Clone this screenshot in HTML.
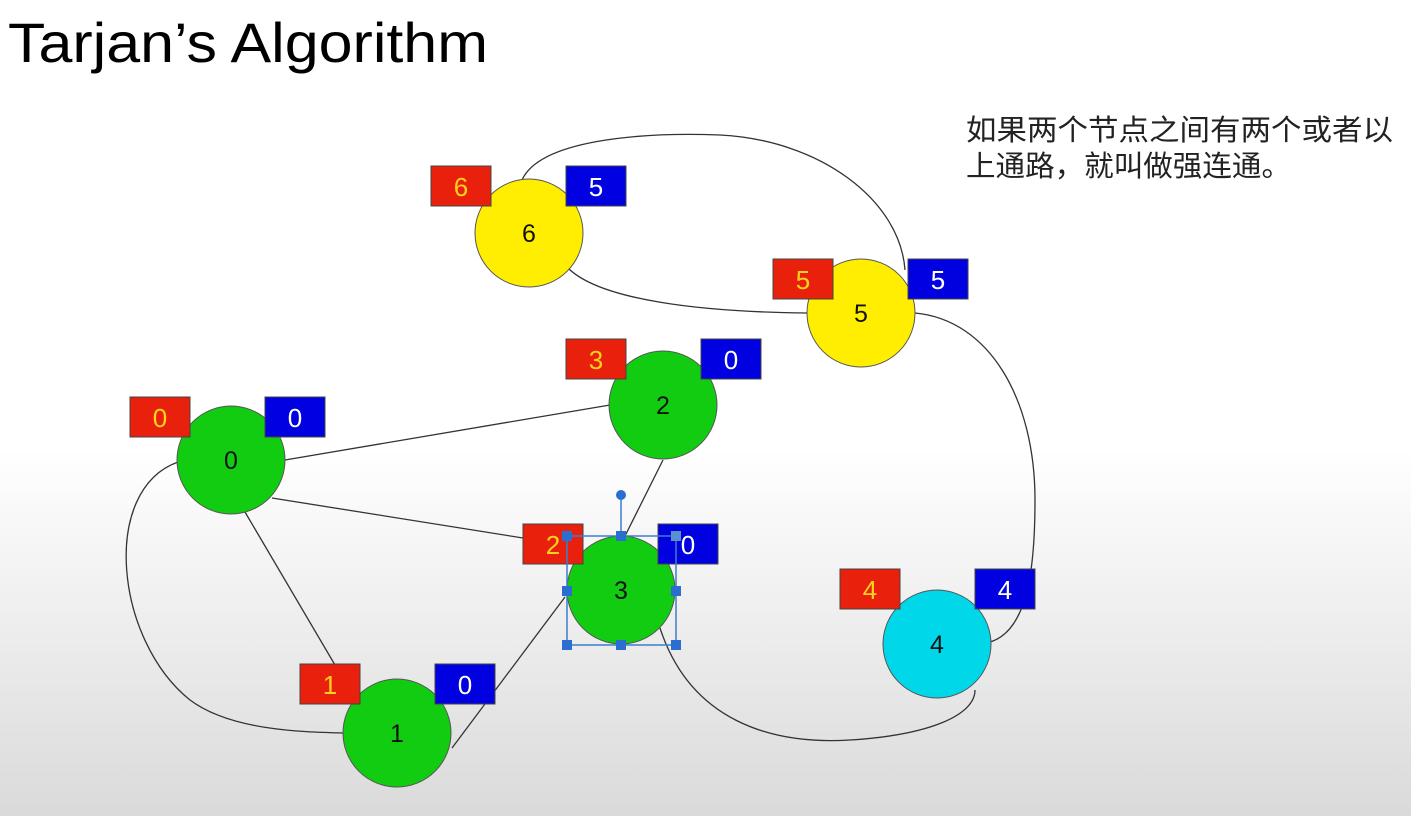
<!DOCTYPE html>
<html><head><meta charset="utf-8">
<style>
html,body{margin:0;padding:0;}
body{width:1411px;height:816px;overflow:hidden;background:linear-gradient(to bottom,#ffffff 0px,#ffffff 450px,#f0f0f0 600px,#dadada 816px);}
svg{position:absolute;left:0;top:0;}
</style></head><body>
<svg width="1411" height="816" viewBox="0 0 1411 816" xmlns="http://www.w3.org/2000/svg" font-family="Liberation Sans, Arial, sans-serif">
<text x="8" y="62" font-size="56" fill="#000" textLength="480" lengthAdjust="spacingAndGlyphs">Tarjan’s Algorithm</text>
<text x="966" y="140" font-size="29" fill="#222" font-family="Liberation Sans, Noto Sans CJK SC, sans-serif" textLength="427" lengthAdjust="spacingAndGlyphs">如果两个节点之间有两个或者以</text>
<text x="966" y="176" font-size="29" fill="#222" font-family="Liberation Sans, Noto Sans CJK SC, sans-serif" textLength="325" lengthAdjust="spacingAndGlyphs">上通路，就叫做强连通。</text>
<g fill="none" stroke="#333" stroke-width="1.3">
<line x1="285" y1="460" x2="610" y2="405"/>
<line x1="272" y1="498" x2="567" y2="545"/>
<line x1="245" y1="512" x2="345" y2="682"/>
<path d="M178,462 C100,490 115,640 190,700 C230,730 300,732 343,733"/>
<line x1="452" y1="748" x2="565" y2="597"/>
<line x1="663" y1="460" x2="625" y2="536"/>
<path d="M660,628 C690,720 770,745 850,740 C930,735 975,715 975,690"/>
<path d="M990,642 C1030,630 1035,560 1035,500 C1035,400 990,320 915,313"/>
<path d="M568,268 C600,300 700,312 808,313"/>
<path d="M522,180 C540,140 640,132 720,135 C820,140 900,200 905,270"/>
</g>
<g stroke="#555" stroke-width="1">
<circle cx="231" cy="460" r="54" fill="#11cc11"/>
<circle cx="663" cy="405" r="54" fill="#11cc11"/>
<circle cx="621" cy="590" r="54" fill="#11cc11"/>
<circle cx="397" cy="733" r="54" fill="#11cc11"/>
<circle cx="937" cy="644" r="54" fill="#00d8ea"/>
<circle cx="861" cy="313" r="54" fill="#ffee00"/>
<circle cx="529" cy="233" r="54" fill="#ffee00"/>
</g>
<g font-size="25" fill="#111" text-anchor="middle">
<text x="231" y="469">0</text><text x="663" y="414">2</text><text x="621" y="599">3</text>
<text x="397" y="742">1</text><text x="937" y="653">4</text><text x="861" y="322">5</text><text x="529" y="242">6</text>
</g>
<g stroke="#444" stroke-width="1">
<rect x="431" y="166" width="60" height="40" fill="#e8200c"/><rect x="566" y="166" width="60" height="40" fill="#0000e0"/>
<rect x="773" y="259" width="60" height="40" fill="#e8200c"/><rect x="908" y="259" width="60" height="40" fill="#0000e0"/>
<rect x="566" y="339" width="60" height="40" fill="#e8200c"/><rect x="701" y="339" width="60" height="40" fill="#0000e0"/>
<rect x="130" y="397" width="60" height="40" fill="#e8200c"/><rect x="265" y="397" width="60" height="40" fill="#0000e0"/>
<rect x="523" y="524" width="60" height="40" fill="#e8200c"/><rect x="658" y="524" width="60" height="40" fill="#0000e0"/>
<rect x="840" y="569" width="60" height="40" fill="#e8200c"/><rect x="975" y="569" width="60" height="40" fill="#0000e0"/>
<rect x="300" y="664" width="60" height="40" fill="#e8200c"/><rect x="435" y="664" width="60" height="40" fill="#0000e0"/>
</g>
<g font-size="26" text-anchor="middle">
<text x="461" y="196" fill="#ffd21a">6</text><text x="596" y="196" fill="#fff">5</text>
<text x="803" y="289" fill="#ffd21a">5</text><text x="938" y="289" fill="#fff">5</text>
<text x="596" y="369" fill="#ffd21a">3</text><text x="731" y="369" fill="#fff">0</text>
<text x="160" y="427" fill="#ffd21a">0</text><text x="295" y="427" fill="#fff">0</text>
<text x="553" y="554" fill="#ffd21a">2</text><text x="688" y="554" fill="#fff">0</text>
<text x="870" y="599" fill="#ffd21a">4</text><text x="1005" y="599" fill="#fff">4</text>
<text x="330" y="694" fill="#ffd21a">1</text><text x="465" y="694" fill="#fff">0</text>
</g>
<g stroke="#3a7fd0" stroke-width="1.5" fill="none">
<rect x="567" y="536" width="109" height="109"/>
<line x1="621" y1="536" x2="621" y2="495"/>
</g>
<g fill="#2a6ed0">
<circle cx="621" cy="495" r="5"/>
<rect x="562" y="531" width="10" height="10"/><rect x="616" y="531" width="10" height="10"/><rect x="671" y="531" width="10" height="10" fill="#5a8fd0"/>
<rect x="562" y="586" width="10" height="10"/><rect x="671" y="586" width="10" height="10"/>
<rect x="562" y="640" width="10" height="10"/><rect x="616" y="640" width="10" height="10"/><rect x="671" y="640" width="10" height="10"/>
</g>
</svg>
</body></html>
